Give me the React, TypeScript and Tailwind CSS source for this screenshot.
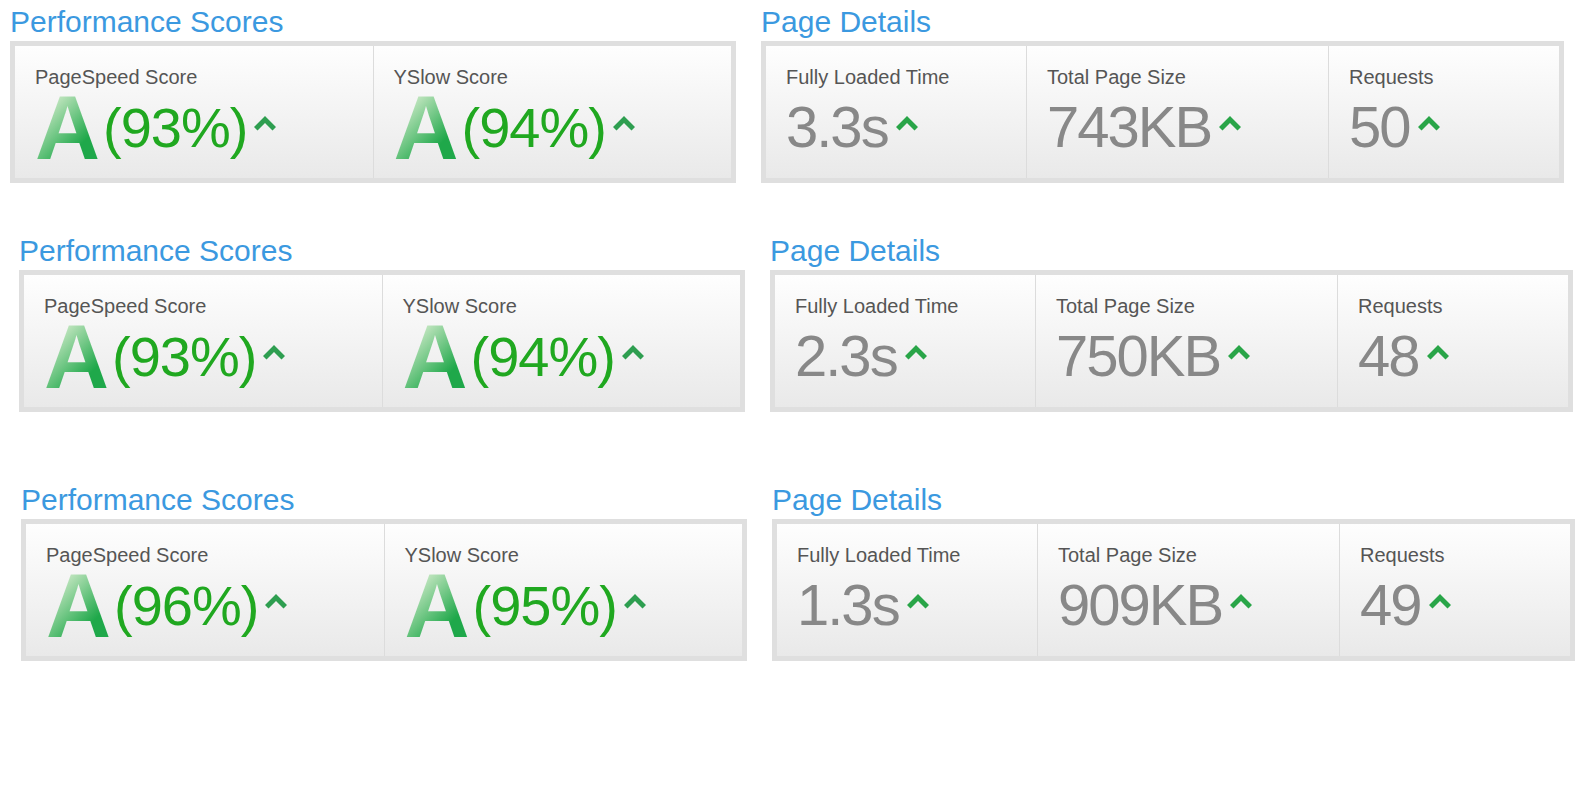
import React from 'react';

type Score = { label: string; grade: string; pct: number };
type Detail = { label: string; value: string };

type Report = { left: number; top: number; scores: Score[]; details: Detail[] };

const reports: Report[] = [
  {
    left: 10,
    top: 0,
    scores: [
      { label: 'PageSpeed Score', grade: 'A', pct: 93 },
      { label: 'YSlow Score', grade: 'A', pct: 94 },
    ],
    details: [
      { label: 'Fully Loaded Time', value: '3.3s' },
      { label: 'Total Page Size', value: '743KB' },
      { label: 'Requests', value: '50' },
    ],
  },
  {
    left: 19,
    top: 50,
    scores: [
      { label: 'PageSpeed Score', grade: 'A', pct: 93 },
      { label: 'YSlow Score', grade: 'A', pct: 94 },
    ],
    details: [
      { label: 'Fully Loaded Time', value: '2.3s' },
      { label: 'Total Page Size', value: '750KB' },
      { label: 'Requests', value: '48' },
    ],
  },
  {
    left: 21,
    top: 70,
    scores: [
      { label: 'PageSpeed Score', grade: 'A', pct: 96 },
      { label: 'YSlow Score', grade: 'A', pct: 95 },
    ],
    details: [
      { label: 'Fully Loaded Time', value: '1.3s' },
      { label: 'Total Page Size', value: '909KB' },
      { label: 'Requests', value: '49' },
    ],
  },
];

// widths of the three page-detail cells (last one takes the rest)
const detailWidths = ['w-[260px]', 'w-[302px]', 'flex-1'];

const UpArrow = ({ color }: { color: string }) => (
  <svg width="22" height="15" viewBox="0 0 22 15" className="shrink-0">
    <polygon points="11,0 22,11 18.5,14.5 11,7 3.5,14.5 0,11" fill={color} />
  </svg>
);

const Title = ({ children }: { children: React.ReactNode }) => (
  <h2 className="text-[30px] leading-[35px] mb-[2px] text-[#3b99e0] font-normal">{children}</h2>
);

const Panel = ({ width, children }: { width: string; children: React.ReactNode }) => (
  <div className={`${width} h-[142px] border-[5px] border-[#dfdfdf] flex bg-[linear-gradient(to_bottom,#fefefe,#e9e9e9)]`}>
    {children}
  </div>
);

const ScoreCell = ({ score, first }: { score: Score; first: boolean }) => (
  <div className={`flex-1 px-5 pt-[19px] ${first ? '' : 'border-l border-[#dcdcdc]'}`}>
    <div className="text-[20px] leading-[24px] text-[#555]">{score.label}</div>
    <div className="flex items-start">
      <span className="mt-[3px] text-[90px] leading-[72px] font-bold text-transparent bg-clip-text bg-[linear-gradient(135deg,#c8e8c4_18%,#1fa84a_72%)]">
        {score.grade}
      </span>
      <span className="mt-[10px] ml-[3px] text-[56px] leading-[57px] text-[#20a820] tracking-[-1px]">
        ({score.pct}%)
      </span>
      <span className="mt-[27px] ml-[7px]">
        <UpArrow color="#2e9e50" />
      </span>
    </div>
  </div>
);

const DetailCell = ({ detail, i }: { detail: Detail; i: number }) => (
  <div className={`${detailWidths[i]} shrink-0 px-5 pt-[19px] ${i === 0 ? '' : 'border-l border-[#dcdcdc]'}`}>
    <div className="text-[20px] leading-[24px] text-[#555]">{detail.label}</div>
    <div className="flex items-start">
      <span className="mt-[9px] text-[58px] leading-[58px] text-[#888] tracking-[-2px]">{detail.value}</span>
      <span className="mt-[27px] ml-[8px]">
        <UpArrow color="#29a548" />
      </span>
    </div>
  </div>
);

export default function App() {
  return (
    <div className="bg-white min-h-screen pt-[4px] font-['Liberation_Sans',Arial,sans-serif]">
      {reports.map((r, idx) => (
        <div key={idx} className="flex gap-[25px]" style={{ marginLeft: r.left, marginTop: r.top }}>
          <div className="flex flex-col">
            <Title>Performance Scores</Title>
            <Panel width="w-[726px]">
              {r.scores.map((s, i) => (
                <ScoreCell key={s.label} score={s} first={i === 0} />
              ))}
            </Panel>
          </div>
          <div className="flex flex-col">
            <Title>Page Details</Title>
            <Panel width="w-[803px]">
              {r.details.map((d, i) => (
                <DetailCell key={d.label} detail={d} i={i} />
              ))}
            </Panel>
          </div>
        </div>
      ))}
    </div>
  );
}
